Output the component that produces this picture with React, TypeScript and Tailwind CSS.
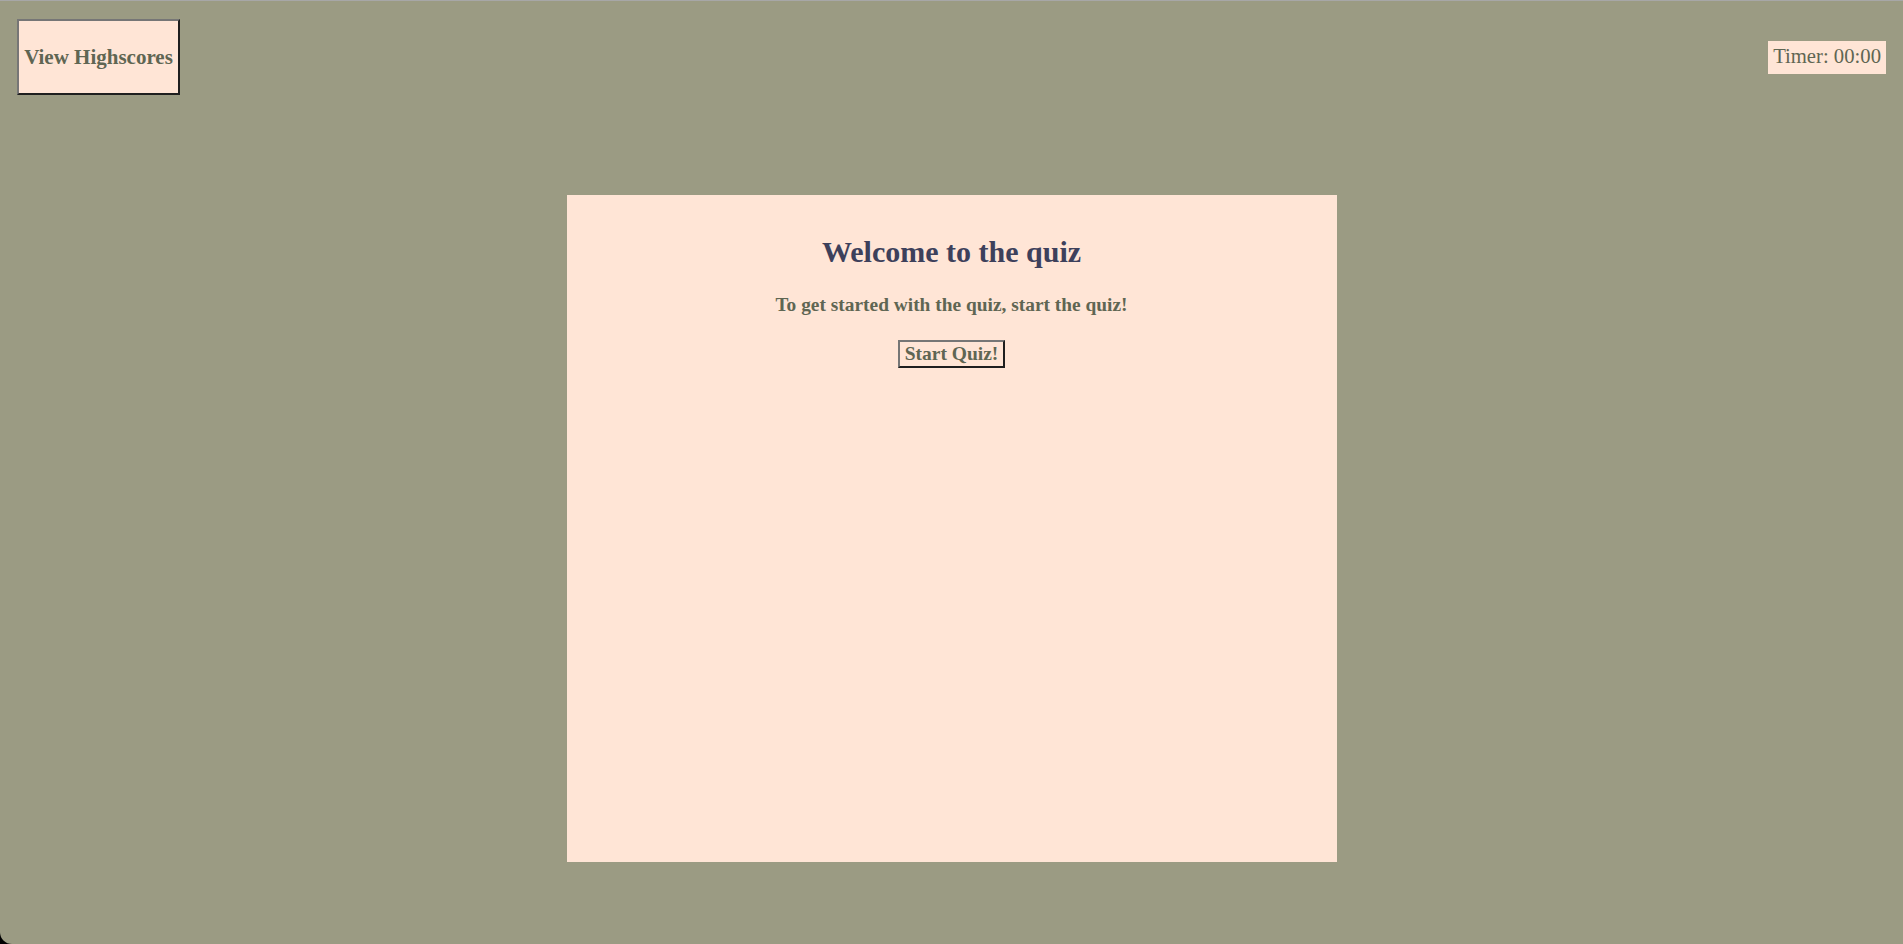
export default function App() {
  return (
    <div className="bg-black min-h-[944px]">
      <div className="min-h-[944px] bg-[#9b9b83] border-t border-[#a7a7a7] rounded-bl-[12px] font-['Liberation_Serif',serif] text-[#5f6653]">
        <header className="flex items-center justify-between px-[17px] pt-[18px]">
          <button className="h-[76px] w-[163px] pt-[1px] bg-[#ffe5d6] border-2 border-t-[#767676] border-l-[#767676] border-r-[#1f1f1f] border-b-[#1f1f1f] text-[21px] font-bold text-[#5f6653]">
            View Highscores
          </button>
          <div className="h-[33px] px-[5px] flex items-center bg-[#ffe5d6] text-[20.7px]">Timer: 00:00</div>
        </header>

        <main className="flex justify-center pt-[100px]">
          <section className="w-[770px] h-[667px] bg-[#ffe5d6] flex flex-col items-center pt-[42px]">
            <h1 className="text-[30px] font-bold text-[#3d405b] leading-none">Welcome to the quiz</h1>
            <p className="mt-[23px] text-[19.4px] font-bold">To get started with the quiz, start the quiz!</p>
            <button className="mt-[21px] h-[28px] px-[5px] border-2 border-t-[#767676] border-l-[#767676] border-r-[#1f1f1f] border-b-[#1f1f1f] text-[19.5px] font-bold leading-none">
              Start Quiz!
            </button>
          </section>
        </main>
      </div>
    </div>
  );
}
